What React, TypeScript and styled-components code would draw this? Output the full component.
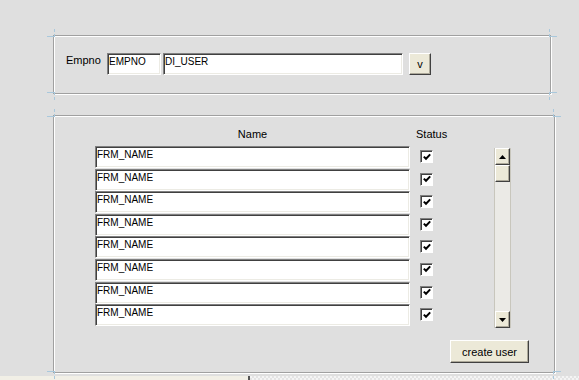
import { FC, Fragment } from "react";
import styled, { createGlobalStyle } from "styled-components";

const GlobalStyle = createGlobalStyle`
    html, body {
        margin: 0;
        padding: 0;
        background: #dfdfdf;
        width: 579px;
        height: 380px;
        overflow: hidden;
    }
    body {
        font-family: "Liberation Sans", Arial, sans-serif;
        font-size: 11px;
        color: #000;
    }
`;

const Page = styled.div`
    position: relative;
    width: 579px;
    height: 380px;
    display: flex;
    flex-direction: column;
    padding: 35px 0 0 53px;
    box-sizing: border-box;
`;

const Panel = styled.div<{ $w: number; $h: number }>`
    position: relative;
    flex: none;
    width: ${(p) => p.$w}px;
    height: ${(p) => p.$h}px;
    box-sizing: border-box;
    border: 1px solid #a0a0a0;
    box-shadow: inset 1px 1px 0 #fff, 1px 1px 0 #fff;
`;

const Marker = styled.span<{ $top?: boolean; $left?: boolean }>`
    position: absolute;
    width: 7px;
    height: 7px;
    ${(p) => (p.$top ? "top: -7px;" : "bottom: -7px;")}
    ${(p) => (p.$left ? "left: -7px;" : "right: -7px;")}
    border-${(p) => (p.$top ? "bottom" : "top")}: 1px solid #a9c8dc;
    border-${(p) => (p.$left ? "right" : "left")}: 1px dashed #a9c8dc;
`;

const Corners: FC = () => (
    <>
        <Marker $top $left />
        <Marker $top />
        <Marker $left />
        <Marker />
    </>
);

const SearchRow = styled.div`
    display: flex;
    align-items: flex-start;
    padding: 17px 0 0 12px;
`;

const Label = styled.span`
    margin: 1px 10px 0 0;
    width: 31px;
    white-space: nowrap;
`;

const Field = styled.div<{ $w: number }>`
    width: ${(p) => p.$w}px;
    height: 22px;
    box-sizing: border-box;
    background: #fff;
    border-top: 1px solid #808080;
    border-left: 1px solid #808080;
    border-right: 1px solid #fff;
    border-bottom: 1px solid #fff;
    box-shadow: inset 1px 1px 0 #404040, inset -1px -1px 0 #ecebe4;
    font-size: 10px;
    line-height: 12px;
    padding: 2px 0 0 1px;
    white-space: nowrap;
    overflow: hidden;
`;

const Button = styled.button<{ $w: number; $h: number }>`
    width: ${(p) => p.$w}px;
    height: ${(p) => p.$h}px;
    padding: 0;
    background: #ece9d8;
    font-family: "Liberation Sans", Arial, sans-serif;
    font-size: 11px;
    color: #000;
    border-top: 1px solid #fff;
    border-left: 1px solid #fff;
    border-right: 1px solid #404040;
    border-bottom: 1px solid #404040;
    box-shadow: inset -1px -1px 0 #aca899;
`;

const Gap = styled.div<{ $w?: number; $h?: number }>`
    width: ${(p) => p.$w ?? 1}px;
    height: ${(p) => p.$h ?? 1}px;
    flex: none;
`;

const Body = styled.div`
    display: flex;
    padding: 11px 0 0 41px;
`;

const Table = styled.div`
    display: grid;
    grid-template-columns: 315px 46px;
    grid-template-rows: 19px;
    grid-auto-rows: 22.6px;
    column-gap: 6px;
`;

const HeadCell = styled.div<{ $center?: boolean }>`
    text-align: ${(p) => (p.$center ? "center" : "left")};
    padding-top: 1px;
`;

const CheckCell = styled.div`
    padding: 4px 0 0 4px;
`;

const CheckBox = styled.div`
    width: 13px;
    height: 13px;
    box-sizing: border-box;
    background: #fff;
    border-top: 1px solid #808080;
    border-left: 1px solid #808080;
    border-right: 1px solid #fff;
    border-bottom: 1px solid #fff;
    box-shadow: inset 1px 1px 0 #404040;
    display: flex;
    align-items: center;
    justify-content: center;
`;

const Scroll = styled.div`
    margin: 21px 0 0 32px;
    width: 17px;
    height: 180px;
    display: flex;
    flex-direction: column;
    background: #ebeae6;
    box-sizing: border-box;
    border-left: 1px solid #c8c6bc;
    border-right: 1px solid #c8c6bc;
`;

const ScrollButton = styled.div`
    height: 17px;
    box-sizing: border-box;
    background: #ece9d8;
    border-top: 1px solid #fff;
    border-left: 1px solid #fff;
    border-right: 1px solid #404040;
    border-bottom: 1px solid #404040;
    box-shadow: inset -1px -1px 0 #aca899;
    display: flex;
    align-items: center;
    justify-content: center;
    flex: none;
`;

const Track = styled.div`
    flex: 1;
`;

const Footer = styled.div`
    display: flex;
    justify-content: flex-end;
    padding: 12px 25px 0 0;
`;

const BottomStrip = styled.div`
    margin: 3px 0 0 -53px;
    height: 5px;
    display: flex;
`;

const StripLeft = styled.div`
    width: 248px;
    background: #f1efe6;
    border-right: 2px solid #555;
`;

const StripRight = styled.div`
    flex: 1;
    background-color: #f4f4f4;
    background-image: linear-gradient(45deg, #e4e4e4 25%, transparent 25%, transparent 75%, #e4e4e4 75%),
        linear-gradient(45deg, #e4e4e4 25%, transparent 25%, transparent 75%, #e4e4e4 75%);
    background-size: 4px 4px;
    background-position: 0 0, 2px 2px;
`;

const Check: FC = () => (
    <svg width="8" height="8" viewBox="0 0 8 8">
        <path d="M0.8 3.6 L3 5.8 L7.2 1.4" stroke="#000" strokeWidth="2" fill="none" />
    </svg>
);

const Arrow: FC<{ up?: boolean }> = ({ up }) => (
    <svg width="7" height="4" viewBox="0 0 7 4">
        <path d={up ? "M0 4 L3.5 0 L7 4 Z" : "M0 0 L3.5 4 L7 0 Z"} fill="#000" />
    </svg>
);

const rows = Array.from({ length: 8 }, () => "FRM_NAME");

const App: FC = () => {
    return (
        <Page>
            <GlobalStyle />
            <Panel $w={498} $h={59}>
                <Corners />
                <SearchRow>
                    <Label>Empno</Label>
                    <Field $w={54}>EMPNO</Field>
                    <Gap $w={2} />
                    <Field $w={240}>DI_USER</Field>
                    <Gap $w={6} />
                    <Button $w={22} $h={22}>v</Button>
                </SearchRow>
            </Panel>
            <Gap $h={21} />
            <Panel $w={502} $h={258}>
                <Corners />
                <Body>
                    <Table>
                        <HeadCell $center>Name</HeadCell>
                        <HeadCell>Status</HeadCell>
                        {rows.map((r, i) => (
                            <Fragment key={i}>
                                <Field $w={315}>{r}</Field>
                                <CheckCell>
                                    <CheckBox>
                                        <Check />
                                    </CheckBox>
                                </CheckCell>
                            </Fragment>
                        ))}
                    </Table>
                    <Scroll>
                        <ScrollButton>
                            <Arrow up />
                        </ScrollButton>
                        <ScrollButton />
                        <Track />
                        <ScrollButton>
                            <Arrow />
                        </ScrollButton>
                    </Scroll>
                </Body>
                <Footer>
                    <Button $w={79} $h={23}>create user</Button>
                </Footer>
            </Panel>
            <BottomStrip>
                <StripLeft />
                <StripRight />
            </BottomStrip>
        </Page>
    );
};

export default App;
